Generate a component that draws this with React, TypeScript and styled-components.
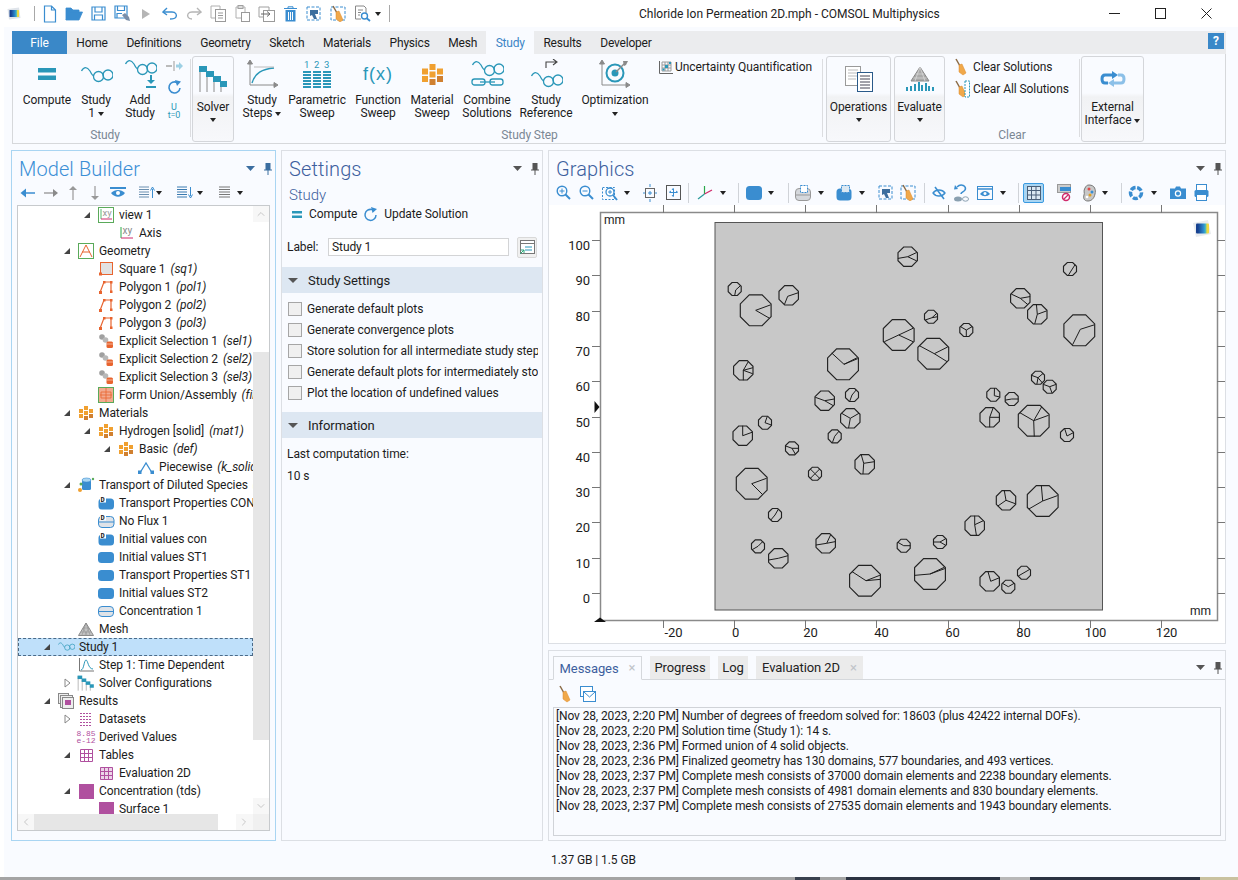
import React from 'react';
import styled, { createGlobalStyle } from 'styled-components';
import { ChevronUp, ChevronDown, ChevronLeft, ChevronRight } from 'lucide-react';

const TEAL = '#2a97b8';
const BLUE = '#3a8dd0';
const ORANGE = '#e8642f';
const AMBER = '#f0a030';
const MAGENTA = '#b0509f';
const GRAY = '#8a8a8a';

const GlobalStyle = createGlobalStyle`
  html, body { margin: 0; padding: 0; background: #fff; }
  body { font-family: Roboto, "Liberation Sans", sans-serif; font-size: 12px; letter-spacing: -0.08px; color: #1c1c1c; }
  * { box-sizing: border-box; }
`;

const Window = styled.div`
  width: 1238px;
  height: 880px;
  overflow: hidden;
  display: flex;
  flex-direction: column;
`;

const TitleBar = styled.div`
  height: 27px;
  display: flex;
  align-items: center;
  background: #fff;
  padding-left: 7px;
`;

const QuickBar = styled.div`
  width: 632px;
  display: flex;
  align-items: center;
`;

const QuickBtn = styled.div<{ $w?: number }>`
  width: ${p => p.$w ?? 24}px;
  height: 20px;
  display: flex;
  align-items: center;
  justify-content: center;
`;

const VSep = styled.div<{ $h?: number; $ml?: number; $mr?: number }>`
  width: 1px;
  height: ${p => p.$h ?? 15}px;
  margin: 0 ${p => p.$mr ?? 8}px 0 ${p => p.$ml ?? 8}px;
  background: #a8a8a8;
`;

const WindowTitle = styled.div`
  flex: 1;
  font-size: 12px;
  letter-spacing: 0;
  color: #222;
`;

const WinButtons = styled.div`
  display: flex;
  align-items: center;
  gap: 35px;
  padding-right: 26px;
`;

const Main = styled.div`
  flex: 1;
  margin-left: 4px;
  background: #f9fbff;
  display: flex;
  flex-direction: column;
  padding-top: 4px;
`;

const TabBar = styled.div`
  margin: 0 12px 0 8px;
  height: 23px;
  background: #ebecee;
  display: flex;
  align-items: stretch;
  position: relative;
`;

const FileTab = styled.div`
  width: 55px;
  background: #3a88c8;
  color: #fff;
  display: flex;
  align-items: center;
  justify-content: center;
`;

const RibbonTab = styled.div<{ $active?: boolean }>`
  padding: 0 9.3px;
  letter-spacing: -0.2px;
  display: flex;
  align-items: center;
  justify-content: center;
  background: ${p => (p.$active ? '#f9fbff' : 'transparent')};
  color: ${p => (p.$active ? '#3c85c6' : '#1c1c1c')};
`;

const HelpButton = styled.div`
  position: absolute;
  right: 2px;
  top: 2px;
  width: 16px;
  height: 16px;
  background: #3a88c8;
  color: #fff;
  font-weight: 700;
  font-size: 12px;
  line-height: 16px;
  text-align: center;
`;

const RibbonBody = styled.div`
  margin: 0 12px 0 8px;
  height: 90px;
  border: 1px solid #d6d8db;
  border-top: none;
  display: flex;
  padding-left: 7px;
`;

const RibbonGroup = styled.div<{ $w: number; $pl?: number }>`
  width: ${p => p.$w}px;
  padding-left: ${p => p.$pl ?? 0}px;
  display: grid;
  grid-template-rows: 73px 1fr;
`;

const GroupItems = styled.div`
  display: flex;
`;

const GroupLabel = styled.div`
  text-align: center;
  color: #7b8794;
  line-height: 16px;
`;

const GroupSep = styled.div<{ $ml?: number; $mr?: number }>`
  width: 1px;
  height: 78px;
  margin: 5px ${p => p.$mr ?? 1}px 0 ${p => p.$ml ?? 0}px;
  background: #dcdde0;
`;

const RibbonItem = styled.div<{ $w: number }>`
  width: ${p => p.$w}px;
  flex: none;
  display: flex;
  flex-direction: column;
  align-items: center;
  text-align: center;
  line-height: 13px;
  white-space: nowrap;
`;

const ItemIcon = styled.div`
  height: 40px;
  flex: none;
  display: flex;
  align-items: center;
  justify-content: center;
`;

const FunctionGlyph = styled.span`
  font-size: 18px;
  letter-spacing: 1px;
  color: ${TEAL};
  font-family: "Liberation Sans", sans-serif;
`;

const BigButton = styled.div<{ $w: number; $ml?: number }>`
  width: ${p => p.$w}px;
  margin: 2px 0 1px ${p => p.$ml ?? 0}px;
  flex: none;
  border: 1px solid #d4d6da;
  border-radius: 3px;
  background: linear-gradient(#f9fbff 0 36px, #f1f2f4 40px, #f7f8fb 100%);
  display: flex;
  flex-direction: column;
  align-items: center;
  text-align: center;
  line-height: 13px;
  white-space: nowrap;
  > div:first-child { height: 44px; }
`;

const CaretMark = styled.span<{ $ml?: number; $mt?: number }>`
  display: inline-block;
  width: 0;
  height: 0;
  margin-left: ${p => p.$ml ?? 3}px;
  margin-top: ${p => p.$mt ?? 0}px;
  vertical-align: middle;
  border-left: 3px solid transparent;
  border-right: 3px solid transparent;
  border-top: 4px solid #222;
`;

const SmallCol = styled.div`
  width: 24px;
  display: flex;
  flex-direction: column;
  align-items: center;
  gap: 8px;
  padding-top: 6px;
`;

const SmallAction = styled.div`
  display: flex;
  align-items: center;
  height: 22px;
  gap: 2px;
  white-space: nowrap;
`;

const ActionText = styled.span<{ $ml: number }>`
  margin-left: ${p => p.$ml}px;
`;

const TinyStack = styled.div`
  color: ${TEAL};
  font-size: 9px;
  line-height: 8px;
  text-align: center;
`;

const SideActions = styled.div<{ $pl: number }>`
  padding: 2px 0 0 ${p => p.$pl}px;
`;

const Workspace = styled.div`
  margin: 6px 12px 0 7px;
  height: 691px;
  display: grid;
  grid-template-columns: 265px 262px 678px;
  column-gap: 5px;
`;

const Panel = styled.div<{ $active?: boolean }>`
  border: 1px solid ${p => (p.$active ? '#a9d5f2' : '#dcdfe4')};
  display: flex;
  flex-direction: column;
  min-height: 0;
  overflow: hidden;
`;

const PanelHead = styled.div`
  display: flex;
  align-items: center;
  justify-content: space-between;
  height: 29px;
  padding: 6px 3px 0 7px;
`;

const PanelTitle = styled.div<{ $active?: boolean }>`
  font-size: 20px;
  font-weight: 300;
  letter-spacing: 0.1px;
  color: ${p => (p.$active ? '#3b8fd6' : '#3d5f9e')};
  white-space: nowrap;
`;

const PanelPins = styled.div`
  display: flex;
  align-items: center;
  gap: 9px;
`;

const ToolRow = styled.div<{ $pl?: number; $h?: number }>`
  height: ${p => p.$h ?? 25}px;
  display: flex;
  align-items: center;
  padding-left: ${p => p.$pl ?? 6}px;
`;

const ToolBtn = styled.div<{ $w?: number; $ml?: number; $on?: boolean }>`
  width: ${p => p.$w ?? 23}px;
  margin-left: ${p => p.$ml ?? 0}px;
  height: 20px;
  display: flex;
  align-items: center;
  justify-content: center;
  flex: none;
  ${p => (p.$on ? `background:#a9d5f2;border:1px solid #3a9ae0;border-radius:2px;` : '')}
`;

const ToolCaret = styled.div<{ $w?: number }>`
  width: ${p => p.$w ?? 14}px;
  display: flex;
  justify-content: center;
  flex: none;
`;

const ToolSep = styled.div<{ $ml?: number; $mr?: number }>`
  width: 1px;
  height: 20px;
  background: #d0d3d8;
  margin: 0 ${p => p.$mr ?? 4}px 0 ${p => p.$ml ?? 4}px;
  flex: none;
`;

const TreeBox = styled.div`
  flex: none;
  height: 626px;
  margin: 0 5px;
  border: 1px solid #c7cacd;
  background: #fff;
  display: grid;
  grid-template-columns: 1fr 16px;
  grid-template-rows: 1fr 16px;
  min-height: 0;
`;

const TreeView = styled.div`
  overflow: hidden;
  min-width: 0;
  min-height: 0;
`;

const TreeRow = styled.div<{ $level: number; $selected?: boolean }>`
  height: 18px;
  display: flex;
  align-items: center;
  white-space: nowrap;
  padding-left: ${p => p.$level * 20 + 20}px;
  ${p => (p.$selected ? `background:#bfe0fa;outline:1px dashed #4a6a88;outline-offset:-1px;` : '')}
`;

const Expander = styled.div`
  width: 18px;
  flex: none;
  display: flex;
  justify-content: center;
`;

const TreeIcon = styled.div`
  width: 20px;
  height: 18px;
  flex: none;
  display: flex;
  align-items: center;
  justify-content: center;
`;

const TreeText = styled.span`
  margin-left: 3px;
  em { margin-left: 5px; font-style: italic; }
`;

const DerivedIcon = styled.span`
  color: ${MAGENTA};
  font-size: 8px;
  line-height: 7px;
  text-align: center;
  font-family: "Liberation Mono", monospace;
`;

const ScrollCol = styled.div`
  background: #fff;
  display: flex;
  flex-direction: column;
`;

const ScrollRowBar = styled.div`
  background: #f7f7f7;
  display: flex;
  grid-column: 1 / 2;
`;

const ScrollArrow = styled.div`
  flex: none;
  width: 16px;
  height: 16px;
  display: flex;
  align-items: center;
  justify-content: center;
  background: #f7f7f7;
`;

const VPiece = styled.div<{ $h: number; $fill?: boolean }>`
  height: ${p => p.$h}px;
  background: ${p => (p.$fill ? '#e6e6e6' : '#fff')};
`;

const HPiece = styled.div<{ $w: number; $fill?: boolean }>`
  width: ${p => p.$w}px;
  background: ${p => (p.$fill ? '#e6e6e6' : '#fff')};
`;

const Corner = styled.div`
  background: #f0f0f0;
`;

const SubTitle = styled.div`
  font-size: 15px;
  font-weight: 300;
  color: #3d5f9e;
  padding: 7px 7px 0;
  line-height: 17px;
`;

const SettingsActions = styled.div`
  display: flex;
  align-items: center;
  padding-left: 10px;
  height: 20px;
  gap: 6px;
  span:first-of-type { margin-left: 1px; }
`;

const LabelRow = styled.div`
  display: flex;
  align-items: center;
  padding-left: 5px;
  margin-top: 12px;
  height: 22px;
`;

const FieldLabel = styled.span`
  width: 41px;
`;

const TextField = styled.div`
  width: 181px;
  height: 18px;
  background: #fff;
  border: 1px solid #d3d4d6;
  line-height: 16px;
  padding-left: 3px;
`;

const FieldButton = styled.div`
  width: 20px;
  height: 21px;
  margin-left: 8px;
  background: #f0f0f0;
  border: 1px solid #d9d9d9;
  border-radius: 2px;
  display: flex;
  align-items: center;
  justify-content: center;
`;

const SectionHead = styled.div<{ $mt: number }>`
  height: 26px;
  margin-top: ${p => p.$mt}px;
  background: #dde7f2;
  display: flex;
  align-items: center;
  gap: 10px;
  padding-left: 6px;
  font-size: 13px;
`;

const SectionCaret = styled.span`
  width: 0;
  height: 0;
  border-left: 5px solid transparent;
  border-right: 5px solid transparent;
  border-top: 5px solid #555;
`;

const CheckList = styled.div`
  padding: 5px 0 0 6px;
  overflow: hidden;
`;

const CheckRow = styled.div`
  height: 21px;
  display: flex;
  align-items: center;
  gap: 5px;
  white-space: nowrap;
  width: 250px;
  overflow: hidden;
`;

const CheckBox = styled.span`
  width: 14px;
  height: 14px;
  flex: none;
  background: #f0f0f0;
  border: 1px solid #a6a6a6;
`;

const InfoLine = styled.div<{ $mt: number }>`
  padding-left: 5px;
  margin-top: ${p => p.$mt}px;
  line-height: 14px;
`;

const RightColumn = styled.div`
  display: flex;
  flex-direction: column;
  gap: 6px;
  min-height: 0;
`;

const GraphicsPanel = styled(Panel)`
  height: 494px;
  flex: none;
`;

const Canvas = styled.div`
  flex: 1;
  background: #fff;
`;

const MessagesPanel = styled(Panel)`
  flex: 1;
`;

const MsgTabs = styled.div`
  height: 29px;
  padding: 5px 3px 0 4px;
  border-bottom: 1px solid #d5d8dc;
  display: flex;
  align-items: stretch;
`;

const MsgTab = styled.div<{ $w: number; $ml?: number; $active?: boolean }>`
  width: ${p => p.$w}px;
  margin-left: ${p => p.$ml ?? 0}px;
  display: flex;
  align-items: center;
  justify-content: center;
  gap: 10px;
  font-size: 13px;
  color: ${p => (p.$active ? '#3d5f9e' : '#222')};
  background: ${p => (p.$active ? '#f9fbff' : '#ebebeb')};
  ${p => (p.$active ? `border:1px solid #d5d8dc;border-bottom:1px solid #f9fbff;height:24px;` : 'height:23px;')}
`;

const TabClose = styled.span`
  color: #c0c4c9;
  font-size: 13px;
  line-height: 12px;
`;

const TabSpacer = styled.div`
  flex: 1;
`;

const MsgLog = styled.div`
  margin: 0 4px;
  height: 129px;
  border: 1px solid #d0d3d8;
  padding: 1px 2px 0;
  line-height: 15px;
  white-space: nowrap;
  letter-spacing: -0.13px;
`;

const StatusBar = styled.div`
  height: 36px;
  line-height: 38px;
  padding-left: 547px;
`;

const DesktopEdge = styled.div`
  height: 3px;
  margin-left: -4px;
  background: linear-gradient(90deg, #a4a4a4 0 795px, #39414f 795px 820px, #a4a4a4 820px 846px, #2c3342 846px 1000px, #b8b8b8 1000px 1030px, #2c3342 1030px 1200px, #c9c2a0 1200px);
`;

// ---------- drawings ----------

type SvgProps = { w: number; h: number; children: React.ReactNode };
const Svg = ({ w, h, children }: SvgProps) => (
  <svg width={w} height={h} viewBox={`0 0 ${w} ${h}`} fill="none" style={{ display: 'block' }}>
    {children}
  </svg>
);

const LogoGradient = ({ id }: { id: string }) => (
  <defs>
    <linearGradient id={id} x1="0" y1="0" x2="1" y2="0">
      <stop offset="0.15" stopColor="#16408f" />
      <stop offset="0.6" stopColor="#2f8fd0" />
      <stop offset="0.72" stopColor="#40b8c0" />
      <stop offset="0.85" stopColor="#f0d840" />
    </linearGradient>
  </defs>
);

const Glasses = ({ x = 0, y = 0, s = 1, c = TEAL }: { x?: number; y?: number; s?: number; c?: string }) => (
  <g transform={`translate(${x} ${y}) scale(${s})`} stroke={c} strokeWidth={1.3} fill="none">
    <path d="M0.500 5C3 0.500 6 0.500 9 5C10.500 8 12 10 13 10" />
    <circle cx="17.500" cy="10.500" r="5" />
    <circle cx="27" cy="9" r="5" />
  </g>
);

const Broom = ({ x = 0, y = 0 }: { x?: number; y?: number }) => (
  <g transform={`translate(${x} ${y})`}>
    <path d="M2 1L6 8" stroke="#8a6a45" strokeWidth={1.5} />
    <path d="M5 7L8 6L12 15L9 17L5 14Z" fill="#f0a84a" stroke="#dd8a2a" strokeWidth={0.5} />
  </g>
);

const Cluster = ({ s = 1 }: { s?: number }) => (
  <svg width={14 * s} height={14 * s} viewBox="0 0 14 14" style={{ display: 'block' }}>
    <rect x="5" y="0" width="4" height="4" fill={AMBER} />
    <rect x="0" y="3" width="4" height="4" fill={AMBER} />
    <rect x="10" y="3" width="4" height="4" fill={AMBER} />
    <rect x="5" y="5" width="4" height="4" fill={AMBER} />
    <rect x="0" y="8" width="4" height="4" fill={AMBER} />
    <rect x="10" y="8" width="4" height="4" fill="#d08030" />
    <rect x="5" y="10" width="4" height="4" fill="#d08030" />
  </svg>
);

const Stairs = ({ s = 1 }: { s?: number }) => (
  <svg width={30 * s} height={28 * s} viewBox="0 0 30 28" style={{ display: 'block' }}>
    <path d="M2 2V27M9 8V27M16 13V27M23 18V27" stroke={GRAY} strokeWidth={1} />
    <rect x="1" y="1" width="8" height="6" fill={TEAL} />
    <rect x="8" y="6" width="8" height="6" fill={TEAL} />
    <rect x="15" y="11" width="8" height="6" fill={TEAL} />
    <rect x="22" y="16" width="7" height="6" fill={TEAL} />
  </svg>
);

const AxesArrows = () => (
  <g stroke={GRAY} strokeWidth={1} fill={GRAY}>
    <path d="M4 2V26H30" fill="none" />
    <path d="M1.5 5L4 1L6.5 5Z" />
    <path d="M28 23.5L32 26L28 28.5Z" />
  </g>
);

const ExplicitBlobs = () => (
  <Svg w={14} h={14}>
    <circle cx="3" cy="3" r="2.800" fill="#a0a0a0" />
    <circle cx="6.500" cy="6" r="2.800" fill="#b8b8b8" />
    <rect x="7.500" y="7.500" width="6.500" height="6.500" rx="1.500" fill={ORANGE} />
    <path d="M7.500 10H14" stroke="#fff" strokeWidth={0.500} />
  </Svg>
);

const Icons: Record<string, React.ReactNode> = {
  new: <Svg w={14} h={18}><path d="M1.5 1H8.5L12.5 5V17H1.5Z M8.5 1V5H12.5" stroke={BLUE} strokeWidth={1.2} /></Svg>,
  open: <Svg w={18} h={15}><path d="M1 14V2H6L8 4H14V6H5L1 14ZM1 14H14L17.5 6H5" fill={BLUE} stroke={BLUE} strokeWidth={0.8} /></Svg>,
  save: <Svg w={15} h={15}><path d="M1 1H14V14H1ZM4 1V6H11V1M3.5 14V9H11.5V14" stroke={BLUE} strokeWidth={1.2} /></Svg>,
  saveAs: <Svg w={17} h={17}><path d="M1 1H13V13H1ZM3.5 1V5.5H10.5V1M3 13V8.5H8" stroke={BLUE} strokeWidth={1.2} /><path d="M8 10L12 15L16 16L15 12L11 8Z" fill="#7a8ea8" /></Svg>,
  play: <Svg w={10} h={12}><path d="M1 1L9 6L1 11Z" fill="#b5b5b5" /></Svg>,
  undo: <Svg w={16} h={13}><path d="M5 1L1 5L5 8" stroke={BLUE} strokeWidth={1.4} /><path d="M1 5H10C14 5 15 8 14 10C13 12 11 12 8 12" stroke={BLUE} strokeWidth={1.4} /></Svg>,
  redo: <Svg w={16} h={13}><path d="M11 1L15 5L11 8" stroke="#b5b5b5" strokeWidth={1.4} /><path d="M15 5H6C2 5 1 8 2 10C3 12 4 12 6 12" stroke="#b5b5b5" strokeWidth={1.4} /></Svg>,
  copy: <Svg w={17} h={17}><path d="M1 1H10V13H1Z" stroke="#b0b0b0" /><rect x="5.5" y="4.5" width="10" height="12" fill="#fff" stroke="#9a9a9a" /><path d="M8 8H13M8 10.500H13M8 13H13" stroke="#9a9a9a" /></Svg>,
  paste: <Svg w={16} h={17}><path d="M2 2H11V13H2Z" stroke="#b0b0b0" /><rect x="4" y="0.500" width="5" height="3" fill="#ddd" stroke="#a0a0a0" /><rect x="7.500" y="7.500" width="8" height="9" fill="#fff" stroke="#9a9a9a" /></Svg>,
  duplicate: <Svg w={17} h={16}><path d="M1 1H11V11H1Z" stroke="#a0a0a0" /><rect x="5.500" y="4.500" width="11" height="11" fill="#fff" stroke="#9a9a9a" /><path d="M3 8H11M9 5.500L12 8L9 10.500" stroke="#666" /></Svg>,
  trash: <Svg w={13} h={16}><path d="M0 2.500H13M4 2.500V0.800H9V2.500" stroke={BLUE} /><path d="M1.500 4H11.500V15.500H1.500Z" fill={BLUE} /><path d="M4.500 6V14M6.500 6V14M8.500 6V14" stroke="#fff" /></Svg>,
  select: <Svg w={16} h={16}><rect x="1" y="1" width="13" height="13" stroke={BLUE} strokeDasharray="3 1.500" /><path d="M4 4H12V8H9L11 13H8L6 9L4 10Z" fill="#3c6e9e" /></Svg>,
  clearSel: <Svg w={16} h={17}><rect x="1" y="2" width="14" height="13" stroke={BLUE} strokeDasharray="3 1.500" /><Broom x={1} y={0} /></Svg>,
  find: <Svg w={17} h={17}><path d="M1.500 1H10L12 3V8M1.500 1V14H7" stroke="#888" /><path d="M4 5H9M4 7.500H7M4 10H6" stroke="#888" /><circle cx="10.500" cy="11" r="3" stroke={BLUE} strokeWidth={1.4} /><path d="M12.500 13L16 16" stroke={BLUE} strokeWidth={1.8} /></Svg>,
  logo: (
    <Svg w={14} h={13}>
      <LogoGradient id="appLogo" />
      <path d="M0.500 2L12 0.500L13.500 11L2 12.500Z" fill="#dfe4ea" />
      <rect x="2.500" y="3" width="9.500" height="7" rx="0.500" fill="url(#appLogo)" />
    </Svg>
  ),
  compute: <Svg w={18} h={12}><rect y="0" width="18" height="4.500" fill={TEAL} /><rect y="7.500" width="18" height="4.500" fill={TEAL} /></Svg>,
  study: <Svg w={33} h={21}><Glasses x={1} y={2} /></Svg>,
  addStudy: <Svg w={33} h={30}><Glasses x={1} y={0} /><path d="M27 16V23" stroke={TEAL} strokeWidth={2} /><path d="M23 21H31L27 25Z" fill={TEAL} /><path d="M22 28H32" stroke={TEAL} strokeWidth={2} /></Svg>,
  splitArrow: <Svg w={17} h={12}><path d="M8 1V11" stroke="#bbb" strokeWidth={1.500} /><path d="M0 6H6" stroke="#bbb" strokeWidth={2} /><path d="M10 6H14" stroke="#9dd0e4" strokeWidth={3} /><path d="M13 2L17 6L13 10Z" fill="#9dd0e4" /></Svg>,
  refresh: <Svg w={15} h={15}><path d="M13 8A5.500 5.500 0 1 1 10 2.500" stroke={BLUE} strokeWidth={1.600} /><path d="M8 0L14 1.500L10 6Z" fill={BLUE} /></Svg>,
  steps: <Svg w={33} h={30}><AxesArrows /><path d="M6 24C9 14 16 10 28 9" stroke={TEAL} strokeWidth={1.400} /><path d="M8 8H28" stroke="#bbb" /></Svg>,
  parametric: (
    <Svg w={28} h={29}>
      <text x="1" y="8" fontSize="9.500" fill={TEAL} fontFamily="Roboto">1</text>
      <text x="11" y="8" fontSize="9.500" fill={TEAL} fontFamily="Roboto">2</text>
      <text x="21" y="8" fontSize="9.500" fill={TEAL} fontFamily="Roboto">3</text>
      {[0, 10, 20].map(x =>
        [11, 14, 17, 20, 23, 26].map(y => <rect key={`${x}-${y}`} x={x} y={y} width="8" height="2" fill={TEAL} />)
      )}
    </Svg>
  ),
  combine: (
    <Svg w={33} h={30}>
      <Glasses x={1} y={1} />
      <rect x="1" y="20" width="13" height="6" rx="2.500" stroke={TEAL} strokeWidth={1.300} />
      <rect x="19" y="20" width="13" height="6" rx="2.500" stroke={TEAL} strokeWidth={1.300} />
      <path d="M9 23H24" stroke={TEAL} strokeWidth={1.300} />
    </Svg>
  ),
  reference: (
    <Svg w={33} h={30}>
      <path d="M16 9V3H26M23 0L27 3L23 6" stroke="#444" strokeWidth={1.100} />
      <Glasses x={1} y={12} />
    </Svg>
  ),
  optimization: (
    <Svg w={34} h={30}>
      <AxesArrows />
      <circle cx="17" cy="14" r="8.500" stroke={TEAL} strokeWidth={2} />
      <circle cx="17" cy="14" r="3.500" fill={TEAL} />
      <path d="M18 13L27 4" stroke={GRAY} strokeWidth={1.500} />
      <path d="M25 2L30 2L28 6L26 7Z" fill={GRAY} />
    </Svg>
  ),
  uq: (
    <Svg w={15} h={15}>
      <path d="M1.500 1V13.500H15" stroke="#666" />
      <path d="M4 2H13V11H4ZM7 2V11M10 2V11M4 5H13M4 8H13" stroke="#9a9a9a" />
      <rect x="7" y="5" width="3" height="3" fill={TEAL} />
      <rect x="11" y="2" width="2" height="2" fill={TEAL} />
      <rect x="4.500" y="8.500" width="2" height="2" fill={TEAL} />
    </Svg>
  ),
  operations: (
    <Svg w={28} h={26}>
      <rect x="0.500" y="0.500" width="15" height="19" fill="#fff" stroke="#9a9a9a" />
      <path d="M3 4H13M3 7H13M3 10H13M3 13H11" stroke="#bbb" />
      <rect x="12.500" y="6.500" width="15" height="19" fill="#fff" stroke="#2a5a8a" />
      <path d="M15 10H25M15 13H25M15 16H25M15 19H25M15 22H25" stroke="#445" />
    </Svg>
  ),
  evaluate: (
    <Svg w={30} h={26}>
      <path d="M15 1L24 15H6Z" fill="#aaa" stroke="#888" />
      <path d="M11 8H19M8.500 12H21.500M15 1L10 15M15 1L20 15" stroke="#ddd" strokeWidth={0.700} />
      {[[1, 4], [5, 5], [9, 7], [13, 9], [16, 6], [20, 8], [23, 5], [27, 4]].map(([x, h]) => (
        <rect key={x} x={x} y={25 - h} width="2" height={h} fill={TEAL} />
      ))}
    </Svg>
  ),
  external: (
    <Svg w={26} h={18}>
      <path d="M14 5H5C1 5 1 13 5 13H8" stroke={BLUE} strokeWidth={3} />
      <path d="M12 1L18 5L12 9Z" fill={BLUE} />
      <path d="M12 13H21C25 13 25 5 21 5H18" stroke="#8cc0e8" strokeWidth={3} />
      <path d="M14 9L8 13L14 17Z" fill="#8cc0e8" />
    </Svg>
  ),
  broom: <Svg w={14} h={18}><Broom x={0} y={0} /></Svg>,
  broomAll: (
    <Svg w={16} h={18}>
      <Broom x={0} y={0} />
      <rect x="11" y="1" width="4.500" height="16" fill="#fff" stroke={TEAL} strokeDasharray="2 1" />
    </Svg>
  ),
  back: <Svg w={16} h={10}><path d="M15 5H3" stroke={BLUE} strokeWidth={1.500} /><path d="M6 0.500L0.500 5L6 9.500Z" fill={BLUE} /></Svg>,
  forward: <Svg w={16} h={10}><path d="M1 5H13" stroke="#8a8a8a" strokeWidth={1.200} /><path d="M10 1L15 5L10 9Z" fill="#8a8a8a" /></Svg>,
  up: <Svg w={10} h={16}><path d="M5 15V3" stroke="#999" strokeWidth={1.200} /><path d="M1 5L5 1L9 5Z" fill="#999" /></Svg>,
  down: <Svg w={10} h={16}><path d="M5 1V13" stroke="#999" strokeWidth={1.200} /><path d="M1 11L5 15L9 11Z" fill="#999" /></Svg>,
  eye: <Svg w={16} h={12}><path d="M0 1H16" stroke={BLUE} strokeWidth={2} /><path d="M1 6C5 2 11 2 15 6C11 11 5 11 1 6Z" fill={BLUE} /><circle cx="8" cy="6" r="2" fill="#fff" /></Svg>,
  listUp: <Svg w={17} h={13}><path d="M1 1H11M1 3.500H11M1 6H11M1 8.500H11M1 11H11" stroke="#6a8fb0" /><path d="M14.500 12V3M12.500 4.500L14.500 1L16.500 4.500" stroke={BLUE} /></Svg>,
  listDown: <Svg w={17} h={13}><path d="M1 1H11M1 3.500H11M1 6H11M1 8.500H11M1 11H11" stroke="#3a7ab0" /><path d="M14.500 1V10M12.500 8.500L14.500 12L16.500 8.500" stroke={BLUE} /></Svg>,
  list: <Svg w={11} h={13}><path d="M0 1H11M0 3.500H11M0 6H11M0 8.500H11M0 11H11" stroke="#777" /></Svg>,
  pin: <Svg w={8} h={12}><rect x="1.500" y="0" width="5" height="7" fill="#3b6ea0" /><path d="M0 7H8M4 7V12" stroke="#3b6ea0" /></Svg>,
  pinGray: <Svg w={8} h={12}><rect x="1.500" y="0" width="5" height="7" fill="#555" /><path d="M0 7H8M4 7V12" stroke="#555" /></Svg>,
  msgBox: (
    <Svg w={16} h={16}>
      <rect x="0.500" y="0.500" width="12" height="10" fill="#fff" stroke={BLUE} />
      <rect x="3.500" y="5.500" width="12" height="10" fill="#fff" stroke={BLUE} />
      <path d="M4 6L9.500 11L15 6" stroke={BLUE} />
    </Svg>
  ),
  fieldIcon: (
    <Svg w={16} h={16}>
      <rect x="1.500" y="1.500" width="14" height="13" fill="#fff" stroke="#777" />
      <path d="M1.500 4.500H15.500" stroke="#777" />
      <path d="M6 8H13M6 11H13" stroke={TEAL} />
      <path d="M1 15L5 11M2 11H5V14" stroke="#2aa87a" />
    </Svg>
  ),
  zoomIn: <Svg w={15} h={15}><circle cx="6" cy="6" r="4.800" stroke={BLUE} strokeWidth={1.400} /><path d="M3.500 6H8.500M6 3.500V8.500" stroke={BLUE} /><path d="M9.500 9.500L14 14" stroke={BLUE} strokeWidth={2} /></Svg>,
  zoomOut: <Svg w={15} h={15}><circle cx="6" cy="6" r="4.800" stroke={BLUE} strokeWidth={1.400} /><path d="M3.500 6H8.500" stroke={BLUE} /><path d="M9.500 9.500L14 14" stroke={BLUE} strokeWidth={2} /></Svg>,
  zoomBox: <Svg w={16} h={16}><rect x="0.500" y="2.500" width="12" height="12" stroke={BLUE} strokeDasharray="2 1.500" /><circle cx="8" cy="7" r="4" fill="#fff" stroke={BLUE} strokeWidth={1.300} /><path d="M6 7H10M8 5V9" stroke={BLUE} /><path d="M11 10L15 15" stroke={BLUE} strokeWidth={2} /></Svg>,
  zoomFit: <Svg w={14} h={18}><rect x="2.500" y="4.500" width="9" height="9" stroke="#666" /><path d="M5 9H9M7 7V11" stroke={BLUE} /><path d="M7 0V3M7 15V18M0 9H2M12 9H14" stroke={BLUE} /></Svg>,
  zoomExtents: <Svg w={15} h={15}><rect x="0.500" y="0.500" width="14" height="14" stroke="#555" /><path d="M4 7.500H11M7.500 4V11M3 7.500L5 6M12 7.500L10 6M7.500 3L6 5M7.500 12L6 10" stroke={BLUE} /></Svg>,
  axes: <Svg w={17} h={16}><path d="M8.500 9V1" stroke="#2aa84a" strokeWidth={1.200} /><path d="M8.500 9L16 5" stroke="#d02a6a" strokeWidth={1.200} /><path d="M8.500 9L2 14" stroke="#2a9a9a" strokeWidth={1.200} /></Svg>,
  solid: <Svg w={16} h={14}><rect width="16" height="14" rx="3.500" fill={BLUE} /></Svg>,
  boundarySel: (
    <Svg w={17} h={16}>
      <rect x="0.500" y="3.500" width="15" height="12" rx="3.500" fill="#d5d8dc" stroke="#999" />
      <rect x="5.500" y="0.500" width="7" height="7" fill="#fff" stroke={BLUE} strokeDasharray="2 1" />
      <path d="M1 10H15" stroke="#999" />
    </Svg>
  ),
  domainSel: (
    <Svg w={17} h={16}>
      <rect x="0.500" y="3.500" width="15" height="12" rx="3.500" fill={BLUE} />
      <rect x="5.500" y="0.500" width="8" height="7" fill="#dbe8f2" stroke={BLUE} strokeDasharray="2 1" />
    </Svg>
  ),
  hide: <Svg w={14} h={14}><path d="M1 7C4 3 10 3 13 7C10 11 4 11 1 7Z" stroke={BLUE} strokeWidth={1.300} /><path d="M3 1L12 13" stroke={BLUE} strokeWidth={1.500} /></Svg>,
  resetHide: <Svg w={16} h={18}><path d="M4 3C8 -1 14 2 12 6C11 8 8 8 8 10" stroke={BLUE} strokeWidth={1.600} /><path d="M2 1L5 5L1 5.500Z" fill={BLUE} /><ellipse cx="5" cy="15" rx="4" ry="2.500" fill="#8aa0b0" /><ellipse cx="12.500" cy="15" rx="3" ry="2.200" stroke="#8aa0b0" /></Svg>,
  viewsEye: <Svg w={16} h={14}><rect x="0.500" y="0.500" width="15" height="13" stroke={BLUE} /><path d="M0.500 3H15.500" stroke={BLUE} strokeWidth={1.500} /><path d="M3 8C6 4 10 4 13 8C10 11 6 11 3 8Z" fill={BLUE} /><circle cx="8" cy="7.500" r="1.500" fill="#fff" /></Svg>,
  grid: <Svg w={14} h={14}><rect x="0.500" y="0.500" width="13" height="13" fill="#dbe8f2" stroke="#4a5f78" /><path d="M4.500 1V13M9 1V13M1 4.500H13M1 9H13" stroke="#4a5f78" /></Svg>,
  noContour: <Svg w={16} h={18}><rect x="0.500" y="0.500" width="13" height="8" fill="#ccc" stroke="#999" /><rect x="3" y="3" width="11" height="4" fill={BLUE} /><circle cx="9" cy="13" r="3.500" fill="#fff" stroke="#d02a6a" strokeWidth={1.500} /><path d="M6.500 15.500L11.500 10.500" stroke="#d02a6a" strokeWidth={1.300} /></Svg>,
  palette: <Svg w={15} h={18}><path d="M7 1C13 1 14 6 13 10C12 15 9 17 6 17C2 17 1 14 2 11C3 9 1 7 3 4C4 2 5 1 7 1Z" fill="#c8c8c8" stroke="#777" /><circle cx="7" cy="5" r="1.500" fill="#e04a4a" /><circle cx="10" cy="8" r="1.500" fill="#3a8dd0" /><circle cx="8" cy="11" r="1.500" fill="#e0a020" /><circle cx="5" cy="13" r="1.300" fill="#fff" /></Svg>,
  scene: <Svg w={16} h={16}><circle cx="8" cy="8" r="5.500" stroke={BLUE} strokeWidth={3.500} strokeDasharray="5 1.600" /></Svg>,
  camera: <Svg w={16} h={13}><path d="M0 2.500H5L6 0.500H10L11 2.500H16V13H0Z" fill={BLUE} /><circle cx="8" cy="7.500" r="3.200" fill="#fff" /><circle cx="8" cy="7.500" r="2" fill={BLUE} /></Svg>,
  printer: <Svg w={15} h={17}><rect x="2.500" y="0.500" width="10" height="6" fill="#fff" stroke={BLUE} /><rect x="0.500" y="6" width="14" height="7" rx="1.500" fill={BLUE} /><rect x="2.500" y="10.500" width="10" height="6" fill="#fff" stroke={BLUE} /></Svg>,
  refreshWide: <Svg w={15} h={15}><path d="M13 8A5.500 5.500 0 1 1 9 2.600" stroke={BLUE} strokeWidth={1.500} /><path d="M8 0L14 2L9.500 6Z" fill={BLUE} /></Svg>,
  // tree
  viewNode: (
    <Svg w={16} h={16}>
      <rect x="0.500" y="0.500" width="15" height="15" stroke="#5aaa5a" />
      <path d="M3 2V12" stroke="#2aa84a" strokeWidth={0.800} />
      <path d="M3 12H14" stroke="#d0286a" />
      <text x="4.500" y="9" fontSize="9.500" fill="#9a9a9a" fontFamily="Roboto">xy</text>
    </Svg>
  ),
  axis: (
    <Svg w={15} h={14}>
      <path d="M2 1V12" stroke="#2aa84a" />
      <path d="M2 12H14" stroke="#d0286a" />
      <text x="3.500" y="8" fontSize="10" fill="#8a8a8a" fontFamily="Roboto">xy</text>
    </Svg>
  ),
  geometry: (
    <Svg w={16} h={16}>
      <rect x="0.500" y="0.500" width="15" height="15" stroke="#5aaa5a" />
      <path d="M2 14L8 2L14 14M4 9H12" stroke={ORANGE} />
    </Svg>
  ),
  square: (
    <Svg w={14} h={14}>
      <rect x="1.500" y="0.500" width="12" height="12" fill="#e2e2e2" stroke={ORANGE} />
      <rect x="0" y="10.500" width="3" height="3" fill={ORANGE} />
    </Svg>
  ),
  polygon: (
    <Svg w={14} h={14}>
      <path d="M1 12.500L5 2H12V12" stroke={ORANGE} strokeWidth={1.200} />
      <rect x="0" y="11" width="3" height="3" fill={ORANGE} />
      <rect x="4" y="1" width="2.500" height="2.500" fill={ORANGE} />
      <rect x="11" y="1" width="2.500" height="2.500" fill={ORANGE} />
      <rect x="11" y="10.500" width="2.500" height="2.500" fill={ORANGE} />
    </Svg>
  ),
  explicit: <ExplicitBlobs />,
  union: (
    <Svg w={16} h={16}>
      <rect x="0.500" y="0.500" width="15" height="15" fill="#f2ab90" stroke="#5aaa5a" />
      <path d="M3 5H13V11H3ZM8 1V15M2 8H14" stroke={ORANGE} strokeWidth={0.800} />
    </Svg>
  ),
  piecewise: (
    <Svg w={16} h={13}>
      <path d="M2.500 11L8 2L13.500 11" stroke={BLUE} strokeWidth={1.300} />
      <rect x="0" y="9.500" width="3.500" height="3.500" fill={BLUE} />
      <rect x="12.500" y="9.500" width="3.500" height="3.500" fill={BLUE} />
    </Svg>
  ),
  transport: (
    <Svg w={17} h={16}>
      <rect x="4" y="2" width="9" height="11" rx="1.500" fill={BLUE} />
      <ellipse cx="8.500" cy="3" rx="4.500" ry="2" fill="#a9d5f2" stroke={BLUE} strokeWidth={0.600} />
      <circle cx="2" cy="13" r="2" fill={AMBER} />
      <circle cx="3" cy="7" r="1.500" fill="#5aaa5a" />
      <circle cx="15" cy="2" r="1.200" fill="#5aaa5a" />
    </Svg>
  ),
  bndD: (
    <Svg w={17} h={14}>
      <rect x="0.500" y="2.500" width="15.500" height="11" rx="3.500" fill={BLUE} />
      <rect x="2" y="0" width="6" height="6.500" fill="#fff" />
      <text x="2.500" y="6" fontSize="7" fontWeight="700" fontFamily="Liberation Mono" fill="#222">D</text>
    </Svg>
  ),
  bndOpen: (
    <Svg w={17} h={14}>
      <rect x="0.500" y="2.500" width="15.500" height="11" rx="3.500" fill="#dfe3e8" stroke={BLUE} />
      <path d="M1 8H16" stroke={BLUE} />
      <rect x="2" y="0" width="6" height="6.500" fill="#fff" />
      <text x="2.500" y="6" fontSize="7" fontWeight="700" fontFamily="Liberation Mono" fill="#222">D</text>
    </Svg>
  ),
  domain: <Svg w={16} h={11}><rect width="16" height="11" rx="3.500" fill={BLUE} /></Svg>,
  concBnd: <Svg w={16} h={11}><rect x="0.500" y="0.500" width="15" height="10" rx="3.500" fill="#dfe3e8" stroke={BLUE} /><path d="M1 5.500H15" stroke={BLUE} /></Svg>,
  mesh: (
    <Svg w={16} h={14}>
      <path d="M8 1L15.500 13.500H0.500Z" fill="#c2c2c2" stroke="#8a8a8a" />
      <path d="M5 6H11M3 10H13M8 1L4 13M8 1L12 13M5 6L9 13M11 6L7 13" stroke="#8a8a8a" strokeWidth={0.500} />
    </Svg>
  ),
  studyNode: <Svg w={17} h={10}><Glasses x={0} y={0} s={0.53} /></Svg>,
  step: (
    <Svg w={16} h={16}>
      <path d="M1.500 1V14H16" stroke="#777" />
      <path d="M3 13C6 13 6 3 8 3C10 3 10 12 15 12" stroke={TEAL} />
    </Svg>
  ),
  solverNode: <Stairs s={0.58} />,
  results: (
    <Svg w={16} h={16}>
      <rect x="0.500" y="0.500" width="10" height="10" fill="#eee" stroke="#888" />
      <rect x="2.500" y="2.500" width="12" height="12" fill="#eee" stroke="#888" />
      <rect x="4.500" y="4.500" width="11" height="11" fill="#eee" stroke="#888" />
      <rect x="7" y="7" width="6" height="5" fill={MAGENTA} />
    </Svg>
  ),
  datasets: (
    <Svg w={12} h={13}>
      {[0, 3, 6, 9].map(x =>
        [0, 3, 6, 9, 12].map(y => <rect key={`${x}-${y}`} x={x} y={y} width="2" height="1" fill={MAGENTA} />)
      )}
    </Svg>
  ),
  tables: (
    <Svg w={13} h={13}>
      <path d="M0.500 0.500H12.500V12.500H0.500ZM4.500 1V12M8.500 1V12M1 4.500H12M1 8.500H12" stroke={MAGENTA} />
    </Svg>
  ),
  evalTable: (
    <Svg w={13} h={13}>
      <rect width="13" height="13" fill="#ecd5e8" />
      <path d="M0.500 0.500H12.500V12.500H0.500ZM4.500 1V12M8.500 1V12M1 4.500H12M1 8.500H12" stroke={MAGENTA} />
    </Svg>
  ),
  plotBig: <Svg w={15} h={15}><rect width="15" height="15" fill={MAGENTA} /></Svg>
};

type Node = { level: number; icon?: React.ReactNode; text: string; tag?: string; state?: 'open' | 'closed'; selected?: boolean };

const ic = (k: string) => Icons[k];

const treeNodes: Node[] = [
  { level: 2, state: 'open', icon: ic('viewNode'), text: 'view 1' },
  { level: 3, icon: ic('axis'), text: 'Axis' },
  { level: 1, state: 'open', icon: ic('geometry'), text: 'Geometry' },
  { level: 2, icon: ic('square'), text: 'Square 1', tag: '(sq1)' },
  { level: 2, icon: ic('polygon'), text: 'Polygon 1', tag: '(pol1)' },
  { level: 2, icon: ic('polygon'), text: 'Polygon 2', tag: '(pol2)' },
  { level: 2, icon: ic('polygon'), text: 'Polygon 3', tag: '(pol3)' },
  { level: 2, icon: ic('explicit'), text: 'Explicit Selection 1', tag: '(sel1)' },
  { level: 2, icon: ic('explicit'), text: 'Explicit Selection 2', tag: '(sel2)' },
  { level: 2, icon: ic('explicit'), text: 'Explicit Selection 3', tag: '(sel3)' },
  { level: 2, icon: ic('union'), text: 'Form Union/Assembly', tag: '(fin)' },
  { level: 1, state: 'open', icon: <Cluster />, text: 'Materials' },
  { level: 2, state: 'open', icon: <Cluster />, text: 'Hydrogen [solid]', tag: '(mat1)' },
  { level: 3, state: 'open', icon: <Cluster />, text: 'Basic', tag: '(def)' },
  { level: 4, icon: ic('piecewise'), text: 'Piecewise', tag: '(k_solid_piecewise)' },
  { level: 1, state: 'open', icon: ic('transport'), text: 'Transport of Diluted Species', tag: '(tds)' },
  { level: 2, icon: ic('bndD'), text: 'Transport Properties CON' },
  { level: 2, icon: ic('bndOpen'), text: 'No Flux 1' },
  { level: 2, icon: ic('bndD'), text: 'Initial values con' },
  { level: 2, icon: ic('domain'), text: 'Initial values ST1' },
  { level: 2, icon: ic('domain'), text: 'Transport Properties ST1' },
  { level: 2, icon: ic('domain'), text: 'Initial values ST2' },
  { level: 2, icon: ic('concBnd'), text: 'Concentration 1' },
  { level: 1, icon: ic('mesh'), text: 'Mesh' },
  { level: 0, state: 'open', icon: ic('studyNode'), text: 'Study 1', selected: true },
  { level: 1, icon: ic('step'), text: 'Step 1: Time Dependent' },
  { level: 1, state: 'closed', icon: ic('solverNode'), text: 'Solver Configurations' },
  { level: 0, state: 'open', icon: ic('results'), text: 'Results' },
  { level: 1, state: 'closed', icon: ic('datasets'), text: 'Datasets' },
  { level: 1, icon: <DerivedIcon>8.85<br />e-12</DerivedIcon>, text: 'Derived Values' },
  { level: 1, state: 'open', icon: ic('tables'), text: 'Tables' },
  { level: 2, icon: ic('evalTable'), text: 'Evaluation 2D' },
  { level: 1, state: 'open', icon: ic('plotBig'), text: 'Concentration (tds)' },
  { level: 2, icon: ic('plotBig'), text: 'Surface 1' }
];

const ExpandMark = ({ state }: { state?: 'open' | 'closed' }) => {
  if (state === 'open') {
    return <Svg w={8} h={8}><path d="M7 1V7H1Z" fill="#444" /></Svg>;
  }
  if (state === 'closed') {
    return <Svg w={7} h={10}><path d="M1 1L6 5L1 9Z" stroke="#888" fill="#fff" /></Svg>;
  }
  return null;
};

// [cx, cy, r, angles from the centre, offset x, offset y]
type Grain = [number, number, number, number[], number?, number?];

const grains: Grain[] = [
  [907.7, 256.7, 10.5, [-25, 25, 170]],
  [1070, 269, 7, [-40, 105], 1, 2],
  [734.7, 289, 7, [-30, 90], 1, 1],
  [755.7, 310.3, 16.7, [-20, 30]],
  [788.7, 295.3, 10.5, [-15, 115], -1, 1],
  [1020.3, 298.3, 10.5, [-10, 40, 205]],
  [1037.3, 314.3, 10.5, [-20, 105, -95]],
  [1079.3, 330.3, 16.7, [-20, 115], 1, -1],
  [931, 316.7, 7, [-30, 0, 150], 1, 1],
  [966.3, 330, 7, [-30, 90, 210]],
  [898.7, 335, 16.7, [-25, 25, 155]],
  [933.3, 353.7, 16.7, [-25, 30, 210], 1, 0],
  [843, 364.3, 16.7, [-25, -21, 225], 1, 0],
  [743.3, 370.3, 10.5, [-60, -15, 20, 90]],
  [1038, 377.7, 7, [-40, 50, 100, 200]],
  [1049.7, 386.7, 7, [-20, 70, 200]],
  [993.3, 394.7, 7, [-80, 20], 1, 1],
  [1011.7, 399, 7, [0, 170]],
  [824.7, 400.7, 10.5, [-10, 30, 200]],
  [852, 395, 7, [-50, 110]],
  [850.3, 418.3, 10.5, [-30, 100, 210]],
  [989.7, 417.3, 10.5, [-70, 0, 90]],
  [1033.7, 420.7, 16.7, [-60, -20, 88, 210]],
  [1067, 435, 7, [-20, -110], 0, 1],
  [765, 422.7, 7, [-70, 20]],
  [742.7, 435.7, 10.5, [-90, -20]],
  [834.7, 436.3, 7, [-50, 110]],
  [792, 448.3, 7, [0, 200, 60]],
  [864.7, 464.3, 10.5, [-110, -15, 100], -1, -1],
  [815, 473.7, 7, [45, 135, 225, 315]],
  [751.7, 483.7, 16.7, [-20, 45]],
  [775, 515, 7, [-60, 130]],
  [1006, 500.3, 10.5, [-100, 20, 145]],
  [1042.7, 501, 16.7, [-95, -20, 150]],
  [974.7, 525.7, 10.5, [-30, -90, 80], 0, -1],
  [825.7, 543.3, 10.5, [-60, -10, 170], 1, 0],
  [758, 546.3, 7, [-45, 150]],
  [778.3, 558.3, 10.5, [-15, 170]],
  [903.7, 545.7, 7, [0, 210]],
  [940, 542, 7, [-30, 30, 180]],
  [865, 580.7, 16.7, [-20, -5, 215], 1, 0],
  [930, 574, 16.7, [-25, -20, 175]],
  [989.7, 581.3, 10.5, [-100, -20], 1, 0],
  [1008.3, 586.7, 7, [-30, 210]],
  [1024, 572.7, 7, [-30, 150]]
];

const octagon = (cx: number, cy: number, r: number) =>
  Array.from({ length: 8 }, (_, i) => {
    const a = ((22.5 + 45 * i) * Math.PI) / 180;
    return `${(cx + r * Math.cos(a)).toFixed(1)},${(cy + r * Math.sin(a)).toFixed(1)}`;
  }).join(' ');

const xTicks = [663.5, 734.5, 805.5, 876.5, 948.5, 1019.5, 1090.5, 1161.5];
const xLabels = ['-20', '0', '20', '40', '60', '80', '100', '120'];
const xLabelShift = [10, 1, 5, 5, 4, 4, 5, 5];
const yLabels = ['100', '90', '80', '70', '60', '50', '40', '30', '20', '10', '0'];
const yTick = (i: number) => Math.round(240 + i * 35.3) + 0.5;

const Plot = () => (
  <svg width={676} height={437} viewBox="549 205 676 437" style={{ display: 'block' }} fontFamily="Roboto" fontSize="13" fill="#1c1c1c">
    <LogoGradient id="plotLogo" />
    <rect x="600.5" y="212.5" width="617" height="408" fill="#fff" stroke="#8a8a8a" strokeWidth={1.5} />
    <rect x="715" y="222.5" width="387.5" height="387.5" fill="#c8c8c8" stroke="#555" />
    {xTicks.map((x, i) => (
      <g key={x}>
        <path d={`M${x} 205V213M${x} 620V628`} stroke="#777" />
        <text x={x + xLabelShift[i]} y={637} textAnchor="middle">{xLabels[i]}</text>
      </g>
    ))}
    {yLabels.map((t, i) => (
      <g key={t}>
        <path d={`M592 ${yTick(i)}H600M1217 ${yTick(i)}H1225`} stroke="#777" />
        <text x={590} y={yTick(i) + 9} textAnchor="end">{t}</text>
      </g>
    ))}
    <text x="604" y="224" fontSize="12">mm</text>
    <text x="1190" y="615" fontSize="12">mm</text>
    <path d="M594 622L600 617.500L606 622Z" fill="#111" />
    <path d="M594.500 401L599.500 407L594.500 413Z" fill="#111" />
    <g transform="translate(1193 220)">
      <path d="M0 3L15 0L18 14L3 17Z" fill="#e8ebee" />
      <rect x="3" y="3.500" width="13" height="10" rx="1" fill="url(#plotLogo)" />
    </g>
    <g fill="none" stroke="#1c1c1c" strokeWidth={1}>
      {grains.map(([cx, cy, r, angles, ox = 0, oy = 0], i) => (
        <g key={i}>
          <polygon points={octagon(cx, cy, r)} stroke="#222" strokeWidth={1.15} />
          {angles.map(a => {
            const t = (a * Math.PI) / 180;
            return (
              <line
                key={a}
                x1={cx + ox}
                y1={cy + oy}
                x2={cx + 0.95 * r * Math.cos(t)}
                y2={cy + 0.95 * r * Math.sin(t)}
              />
            );
          })}
        </g>
      ))}
    </g>
  </svg>
);

const messages = [
  '[Nov 28, 2023, 2:20 PM] Number of degrees of freedom solved for: 18603 (plus 42422 internal DOFs).',
  '[Nov 28, 2023, 2:20 PM] Solution time (Study 1): 14 s.',
  '[Nov 28, 2023, 2:36 PM] Formed union of 4 solid objects.',
  '[Nov 28, 2023, 2:36 PM] Finalized geometry has 130 domains, 577 boundaries, and 493 vertices.',
  '[Nov 28, 2023, 2:37 PM] Complete mesh consists of 37000 domain elements and 2238 boundary elements.',
  '[Nov 28, 2023, 2:37 PM] Complete mesh consists of 4981 domain elements and 830 boundary elements.',
  '[Nov 28, 2023, 2:37 PM] Complete mesh consists of 27535 domain elements and 1943 boundary elements.'
];

const studyChecks = [
  'Generate default plots',
  'Generate convergence plots',
  'Store solution for all intermediate study steps',
  'Generate default plots for intermediately stored solutions',
  'Plot the location of undefined values'
];

const quick = ['new', 'open', 'save', 'saveAs', 'play', 'undo', 'redo', 'copy', 'paste', 'duplicate', 'trash', 'select', 'clearSel', 'find'];

const tabs: [string, boolean?][] = [
  ['Home'], ['Definitions'], ['Geometry'], ['Sketch'], ['Materials'], ['Physics'], ['Mesh'],
  ['Study', true], ['Results'], ['Developer']
];

const Pins = ({ active }: { active?: boolean }) => (
  <PanelPins>
    <Svg w={9} h={5}><path d="M0 0H9L4.500 5Z" fill={active ? '#3b6ea0' : '#555'} /></Svg>
    {ic(active ? 'pin' : 'pinGray')}
  </PanelPins>
);

const Caret = ({ mt }: { mt?: number }) => <CaretMark $ml={0} $mt={mt} />;

const App: React.FC = () => (
  <Window>
    <GlobalStyle />
    <TitleBar>
      <QuickBar>
        <QuickBtn $w={14}>{ic('logo')}</QuickBtn>
        <VSep $ml={13} $mr={3} />
        {quick.map(k => (
          <QuickBtn key={k}>{ic(k)}</QuickBtn>
        ))}
        <CaretMark $ml={1} />
        <VSep $h={17} />
      </QuickBar>
      <WindowTitle>Chloride Ion Permeation 2D.mph - COMSOL Multiphysics</WindowTitle>
      <WinButtons>
        <Svg w={11} h={11}><path d="M0 5.500H11" stroke="#222" /></Svg>
        <Svg w={11} h={11}><rect x="0.500" y="0.500" width="10" height="10" stroke="#222" /></Svg>
        <Svg w={11} h={11}><path d="M0.500 0.500L10.500 10.500M10.500 0.500L0.500 10.500" stroke="#222" /></Svg>
      </WinButtons>
    </TitleBar>
    <Main>
      <TabBar>
        <FileTab>File</FileTab>
        {tabs.map(([t, active]) => (
          <RibbonTab key={t} $active={active}>{t}</RibbonTab>
        ))}
        <HelpButton>?</HelpButton>
      </TabBar>
      <RibbonBody>
        <RibbonGroup $w={170}>
          <GroupItems>
            <RibbonItem $w={54}><ItemIcon>{ic('compute')}</ItemIcon>Compute</RibbonItem>
            <RibbonItem $w={44}><ItemIcon>{ic('study')}</ItemIcon>Study<span>1<CaretMark /></span></RibbonItem>
            <RibbonItem $w={44}><ItemIcon>{ic('addStudy')}</ItemIcon>Add<br />Study</RibbonItem>
            <SmallCol>
              {ic('splitArrow')}
              {ic('refresh')}
              <TinyStack>U<br />t=0</TinyStack>
            </SmallCol>
          </GroupItems>
          <GroupLabel>Study</GroupLabel>
        </RibbonGroup>
        <GroupSep />
        <BigButton $w={42}>
          <ItemIcon><Stairs /></ItemIcon>
          <div>Solver</div>
          <Caret mt={4} />
        </BigButton>
        <RibbonGroup $w={588} $pl={3}>
          <GroupItems>
            <RibbonItem $w={50}><ItemIcon>{ic('steps')}</ItemIcon>Study<span>Steps<CaretMark /></span></RibbonItem>
            <RibbonItem $w={60}><ItemIcon>{ic('parametric')}</ItemIcon>Parametric<br />Sweep</RibbonItem>
            <RibbonItem $w={62}><ItemIcon><FunctionGlyph>f(x)</FunctionGlyph></ItemIcon>Function<br />Sweep</RibbonItem>
            <RibbonItem $w={46}><ItemIcon><Cluster s={1.5} /></ItemIcon>Material<br />Sweep</RibbonItem>
            <RibbonItem $w={64}><ItemIcon>{ic('combine')}</ItemIcon>Combine<br />Solutions</RibbonItem>
            <RibbonItem $w={54}><ItemIcon>{ic('reference')}</ItemIcon>Study<br />Reference</RibbonItem>
            <RibbonItem $w={84}><ItemIcon>{ic('optimization')}</ItemIcon>Optimization<Caret mt={5} /></RibbonItem>
            <SideActions $pl={1}>
              <SmallAction>{ic('uq')}Uncertainty Quantification</SmallAction>
            </SideActions>
          </GroupItems>
          <GroupLabel>Study Step</GroupLabel>
        </RibbonGroup>
        <GroupSep />
        <BigButton $w={65} $ml={2}>
          <ItemIcon>{ic('operations')}</ItemIcon>
          <div>Operations</div>
          <Caret mt={4} />
        </BigButton>
        <BigButton $w={51} $ml={3}>
          <ItemIcon>{ic('evaluate')}</ItemIcon>
          <div>Evaluate</div>
          <Caret mt={4} />
        </BigButton>
        <RibbonGroup $w={134}>
          <GroupItems>
            <SideActions $pl={9}>
              <SmallAction>{ic('broom')}<ActionText $ml={3}>Clear Solutions</ActionText></SmallAction>
              <SmallAction>{ic('broomAll')}<ActionText $ml={1}>Clear All Solutions</ActionText></SmallAction>
            </SideActions>
          </GroupItems>
          <GroupLabel>Clear</GroupLabel>
        </RibbonGroup>
        <GroupSep />
        <BigButton $w={63}>
          <ItemIcon>{ic('external')}</ItemIcon>
          <div>External<br />Interface<CaretMark /></div>
        </BigButton>
      </RibbonBody>
      <Workspace>
        <Panel $active>
          <PanelHead>
            <PanelTitle $active>Model Builder</PanelTitle>
            <Pins active />
          </PanelHead>
          <ToolRow $pl={4}>
            <ToolBtn>{ic('back')}</ToolBtn>
            <ToolBtn>{ic('forward')}</ToolBtn>
            <ToolBtn $w={22}>{ic('up')}</ToolBtn>
            <ToolBtn $w={22}>{ic('down')}</ToolBtn>
            <ToolBtn $w={24}>{ic('eye')}</ToolBtn>
            <ToolBtn $w={20} $ml={6}>{ic('listUp')}</ToolBtn>
            <ToolCaret $w={6}><Caret /></ToolCaret>
            <ToolBtn $w={20} $ml={12}>{ic('listDown')}</ToolBtn>
            <ToolCaret $w={12}><Caret /></ToolCaret>
            <ToolBtn $w={20} $ml={8}>{ic('list')}</ToolBtn>
            <ToolCaret $w={12}><Caret /></ToolCaret>
          </ToolRow>
          <TreeBox>
            <TreeView>
              {treeNodes.map(n => (
                <TreeRow key={n.text + (n.tag ?? '')} $level={n.level} $selected={n.selected}>
                  <Expander><ExpandMark state={n.state} /></Expander>
                  <TreeIcon>{n.icon}</TreeIcon>
                  <TreeText>{n.text}{n.tag && <em>{n.tag}</em>}</TreeText>
                </TreeRow>
              ))}
            </TreeView>
            <ScrollCol>
              <ScrollArrow><ChevronUp size={12} color="#c8c8c8" /></ScrollArrow>
              <VPiece $h={130} />
              <VPiece $h={388} $fill />
              <VPiece $h={58} />
              <ScrollArrow><ChevronDown size={12} color="#c8c8c8" /></ScrollArrow>
            </ScrollCol>
            <ScrollRowBar>
              <ScrollArrow><ChevronLeft size={12} color="#c8c8c8" /></ScrollArrow>
              <HPiece $w={184} $fill />
              <HPiece $w={18} />
              <ScrollArrow><ChevronRight size={12} color="#c8c8c8" /></ScrollArrow>
            </ScrollRowBar>
            <Corner />
          </TreeBox>
        </Panel>

        <Panel>
          <PanelHead>
            <PanelTitle>Settings</PanelTitle>
            <Pins />
          </PanelHead>
          <SubTitle>Study</SubTitle>
          <SettingsActions>
            <Svg w={10} h={7}><rect width="10" height="2.500" fill={TEAL} /><rect y="4.500" width="10" height="2.500" fill={TEAL} /></Svg>
            <span>Compute</span>
            {ic('refreshWide')}
            <span>Update Solution</span>
          </SettingsActions>
          <LabelRow>
            <FieldLabel>Label:</FieldLabel>
            <TextField>Study 1</TextField>
            <FieldButton>{ic('fieldIcon')}</FieldButton>
          </LabelRow>
          <SectionHead $mt={9}><SectionCaret />Study Settings</SectionHead>
          <CheckList>
            {studyChecks.map(c => (
              <CheckRow key={c}><CheckBox />{c}</CheckRow>
            ))}
          </CheckList>
          <SectionHead $mt={9}><SectionCaret />Information</SectionHead>
          <InfoLine $mt={9}>Last computation time:</InfoLine>
          <InfoLine $mt={8}>10 s</InfoLine>
        </Panel>

        <RightColumn>
          <GraphicsPanel>
            <PanelHead>
              <PanelTitle>Graphics</PanelTitle>
              <Pins />
            </PanelHead>
            <ToolRow $pl={3}>
              <ToolBtn>{ic('zoomIn')}</ToolBtn>
              <ToolBtn>{ic('zoomOut')}</ToolBtn>
              <ToolBtn>{ic('zoomBox')}</ToolBtn>
              <ToolCaret $w={12}><Caret /></ToolCaret>
              <ToolBtn $w={24} $ml={5}>{ic('zoomFit')}</ToolBtn>
              <ToolBtn $w={22}>{ic('zoomExtents')}</ToolBtn>
              <ToolSep />
              <ToolBtn $w={22}>{ic('axes')}</ToolBtn>
              <ToolCaret $w={16}><Caret /></ToolCaret>
              <ToolSep $ml={7} $mr={7} />
              <ToolBtn $w={16}>{ic('solid')}</ToolBtn>
              <ToolCaret $w={18}><Caret /></ToolCaret>
              <ToolSep $ml={8} />
              <ToolBtn $w={20}>{ic('boundarySel')}</ToolBtn>
              <ToolCaret $w={16}><Caret /></ToolCaret>
              <ToolBtn $w={22} $ml={4}>{ic('domainSel')}</ToolBtn>
              <ToolCaret><Caret /></ToolCaret>
              <ToolBtn $w={22} $ml={6}>{ic('select')}</ToolBtn>
              <ToolBtn $w={22}>{ic('clearSel')}</ToolBtn>
              <ToolSep $ml={5} />
              <ToolBtn $w={20}>{ic('hide')}</ToolBtn>
              <ToolBtn $w={24}>{ic('resetHide')}</ToolBtn>
              <ToolBtn $w={24}>{ic('viewsEye')}</ToolBtn>
              <ToolCaret $w={12}><Caret /></ToolCaret>
              <ToolSep $ml={9} />
              <ToolBtn $w={21} $on>{ic('grid')}</ToolBtn>
              <ToolBtn $w={20} $ml={11}>{ic('noContour')}</ToolBtn>
              <ToolBtn $w={24} $ml={2}>{ic('palette')}</ToolBtn>
              <ToolCaret $w={8}><Caret /></ToolCaret>
              <ToolSep $ml={12} />
              <ToolBtn $w={20}>{ic('scene')}</ToolBtn>
              <ToolCaret $w={16}><Caret /></ToolCaret>
              <ToolBtn $w={24} $ml={4}>{ic('camera')}</ToolBtn>
              <ToolBtn $w={22}>{ic('printer')}</ToolBtn>
            </ToolRow>
            <Canvas><Plot /></Canvas>
          </GraphicsPanel>
          <MessagesPanel>
            <MsgTabs>
              <MsgTab $w={89} $active>Messages<TabClose>×</TabClose></MsgTab>
              <MsgTab $w={60} $ml={8}>Progress</MsgTab>
              <MsgTab $w={30} $ml={8}>Log</MsgTab>
              <MsgTab $w={107} $ml={8}>Evaluation 2D<TabClose>×</TabClose></MsgTab>
              <TabSpacer />
              <Pins />
            </MsgTabs>
            <ToolRow $pl={4} $h={27}>
              <ToolBtn>{ic('broom')}</ToolBtn>
              <ToolBtn>{ic('msgBox')}</ToolBtn>
            </ToolRow>
            <MsgLog>
              {messages.map((m, i) => <div key={i}>{m}</div>)}
            </MsgLog>
          </MessagesPanel>
        </RightColumn>
      </Workspace>
      <StatusBar>1.37 GB | 1.5 GB</StatusBar>
      <DesktopEdge />
    </Main>
  </Window>
);

export default App;
